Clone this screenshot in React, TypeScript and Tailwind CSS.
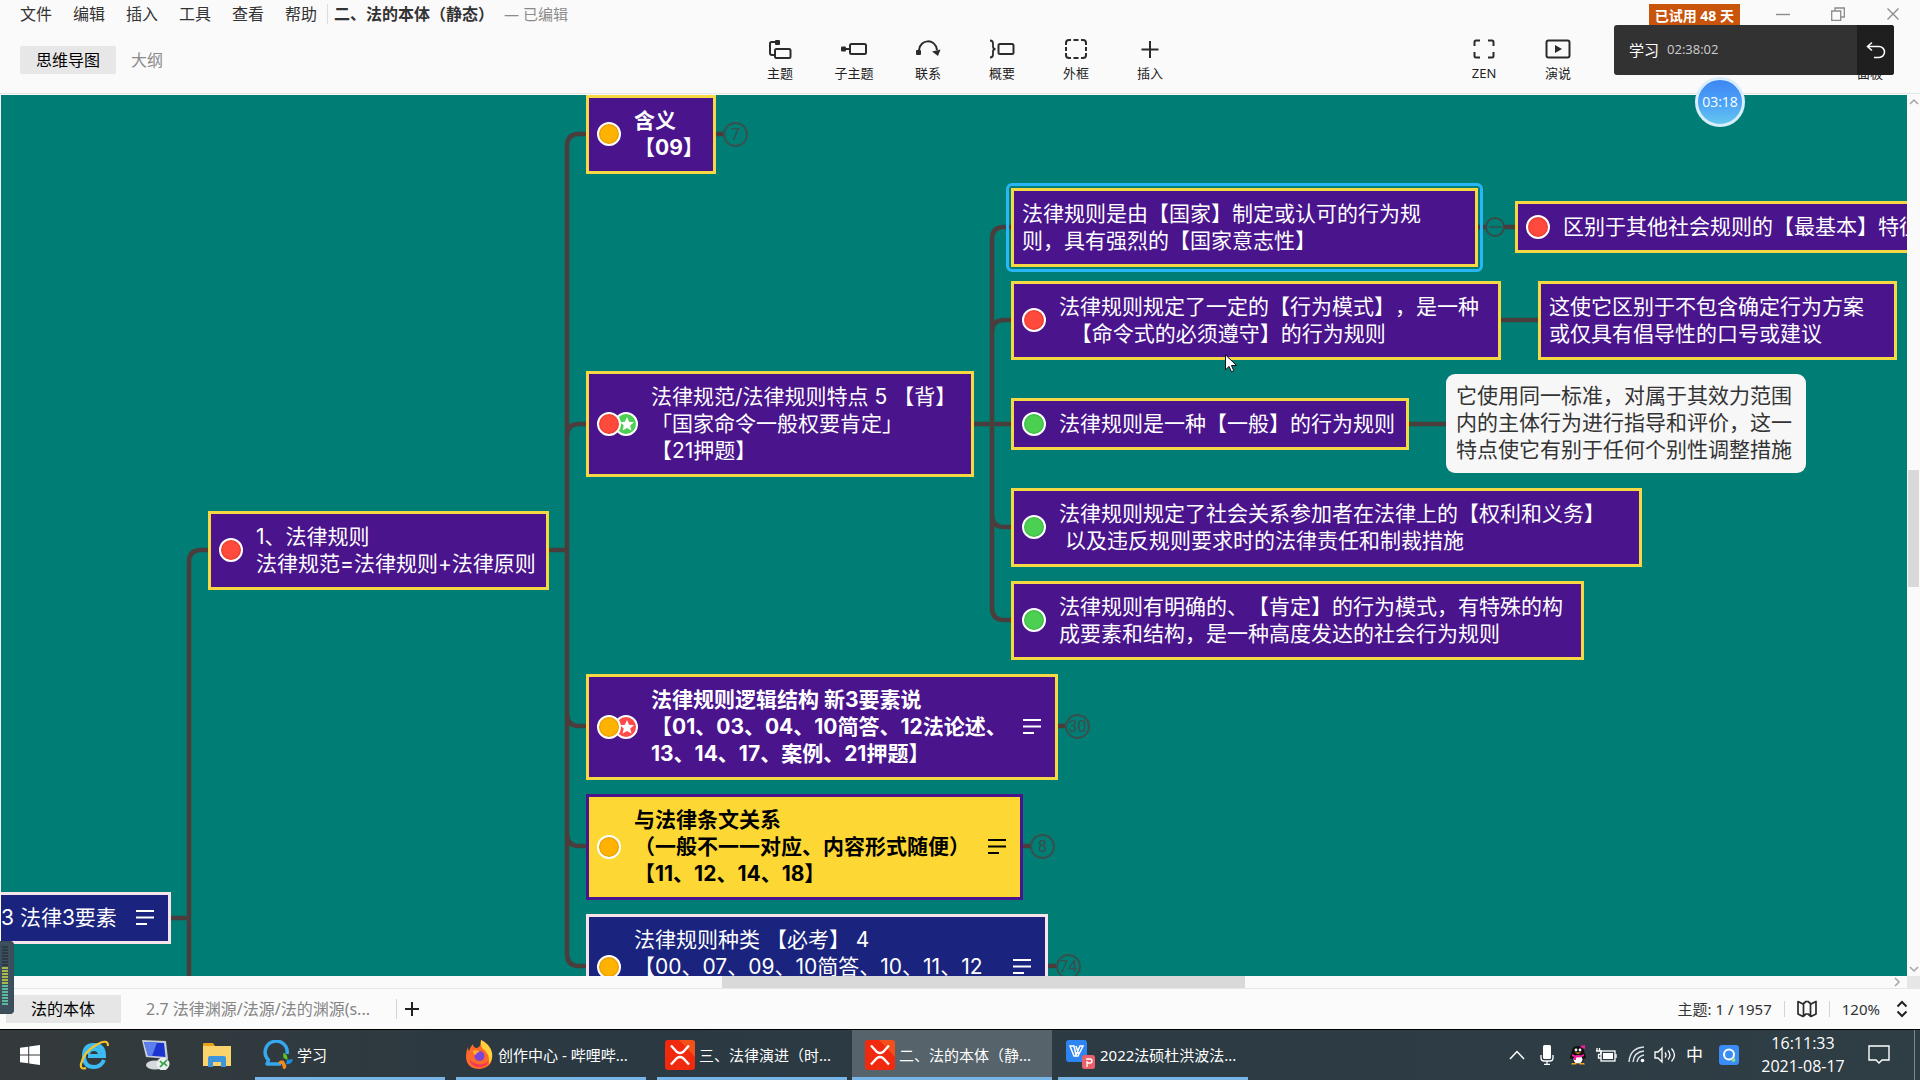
import type { ReactNode } from "react";

type Mark = "orange" | "red" | "green" | "greenStar" | "redStar";
type Tone = "purple" | "yellow" | "navy";

interface Topic {
  x: number;
  y: number;
  w: number;
  lines: string[];
  tone?: Tone;
  marks?: Mark[];
  bold?: boolean;
  note?: boolean;
  selected?: boolean;
}

const topics: Topic[] = [
  { x: -11, y: 797, w: 181, lines: ["3 法律3要素"], tone: "navy", note: true },
  { x: 207, y: 416, w: 341, lines: ["1、法律规则", "法律规范=法律规则+法律原则"], marks: ["red"] },
  { x: 585, y: 0, w: 130, lines: ["含义", "【09】"], marks: ["orange"], bold: true },
  {
    x: 585,
    y: 276,
    w: 388,
    lines: ["法律规范/法律规则特点 5 【背】", "「国家命令一般权要肯定」", "【21押题】"],
    marks: ["red", "greenStar"],
  },
  {
    x: 585,
    y: 579,
    w: 472,
    lines: ["法律规则逻辑结构 新3要素说", "【01、03、04、10简答、12法论述、", "13、14、17、案例、21押题】"],
    marks: ["orange", "redStar"],
    bold: true,
    note: true,
  },
  {
    x: 585,
    y: 699,
    w: 437,
    lines: ["与法律条文关系", "（一般不一一对应、内容形式随便）", "【11、12、14、18】"],
    tone: "yellow",
    marks: ["orange"],
    bold: true,
    note: true,
  },
  {
    x: 585,
    y: 819,
    w: 462,
    lines: ["法律规则种类 【必考】 4", "【00、07、09、10简答、10、11、12", " "],
    tone: "navy",
    marks: ["orange"],
    note: true,
  },
  {
    x: 1010,
    y: 93,
    w: 467,
    lines: ["法律规则是由【国家】制定或认可的行为规", "则，具有强烈的【国家意志性】"],
    selected: true,
  },
  {
    x: 1010,
    y: 186,
    w: 490,
    lines: ["法律规则规定了一定的【行为模式】，是一种", "  【命令式的必须遵守】的行为规则"],
    marks: ["red"],
  },
  { x: 1010, y: 303, w: 398, lines: ["法律规则是一种【一般】的行为规则"], marks: ["green"] },
  {
    x: 1010,
    y: 393,
    w: 631,
    lines: ["法律规则规定了社会关系参加者在法律上的【权利和义务】", " 以及违反规则要求时的法律责任和制裁措施"],
    marks: ["green"],
  },
  {
    x: 1010,
    y: 486,
    w: 573,
    lines: ["法律规则有明确的、【肯定】的行为模式，有特殊的构", "成要素和结构，是一种高度发达的社会行为规则"],
    marks: ["green"],
  },
  { x: 1514, y: 106, w: 480, lines: ["区别于其他社会规则的【最基本】特征"], marks: ["red"] },
  { x: 1537, y: 186, w: 359, lines: ["这使它区别于不包含确定行为方案", "或仅具有倡导性的口号或建议"] },
];

const counts = [
  { x: 722, y: 27, n: "7" },
  { x: 1064, y: 619, n: "30" },
  { x: 1029, y: 739, n: "8" },
  { x: 1055, y: 859, n: "74" },
];

const tones: Record<Tone, string> = {
  purple: "border-[#f6d845] bg-[#4a148c] text-white",
  yellow: "border-[#4a148c] bg-[#fdd835] text-black",
  navy: "border-[#f7e3ea] bg-[#1a237e] text-white",
};

const markFill: Record<Mark, string> = {
  orange: "bg-[#ffb300] shadow-[inset_0_0_2px_#b36b00]",
  red: "bg-[#ff4a3d] shadow-[inset_0_0_2px_#b32015]",
  green: "bg-[#4bd052] shadow-[inset_0_0_2px_#1d8a2a]",
  greenStar: "bg-[#4bd052]",
  redStar: "bg-[#ff4a4a]",
};

function Marker({ kind }: { kind: Mark }) {
  const star = kind === "greenStar" || kind === "redStar";
  return (
    <span className={`flex size-6 items-center justify-center rounded-full border-2 border-white ${markFill[kind]}`}>
      {star && (
        <svg viewBox="0 0 24 24" className="ml-0.5 size-4" fill="#fff">
          <path d="M12 1.5l3.1 7 7.4.8-5.6 5 1.7 7.5L12 17.900l-6.600 3.900 1.700-7.500-5.600-5 7.400-.8z" />
        </svg>
      )}
    </span>
  );
}

function TopicNode({ t }: { t: Topic }) {
  return (
    <div
      className={`absolute flex items-center border-3 pt-[9px] pr-3.5 pb-[10px] pl-2 ${tones[t.tone ?? "purple"]} ${
        t.selected ? "before:absolute before:-inset-2 before:rounded-md before:border-3 before:border-[#29b6f6]" : ""
      }`}
      style={{ left: t.x, top: t.y, width: t.w }}
    >
      {t.marks && (
        <span className="mr-[13px] flex shrink-0">
          {t.marks.map((m, i) => (
            <span key={m} className={i ? "-ml-[7px]" : "relative z-10"}>
              <Marker kind={m} />
            </span>
          ))}
        </span>
      )}
      <p className={`whitespace-pre text-[21px] leading-[27px] ${t.bold ? "font-bold" : ""}`}>{t.lines.join("\n")}</p>
      {t.note && (
        <svg
          viewBox="0 0 18 15"
          className="ml-auto h-[15px] w-[18px] shrink-0"
          stroke="currentColor"
          strokeWidth="1.8"
        >
          <path d="M0 1h18M0 7.500h18M0 14h11" />
        </svg>
      )}
    </div>
  );
}

function Connectors() {
  return (
    <svg className="absolute inset-0 h-full w-full" fill="none" stroke="#4c3d3d" strokeWidth="4.5">
      <path d="M170 823H188M188 900V467Q188 455 200 455H207M547 455H566" />
      <path d="M585 39H578Q566 39 566 51V859Q566 871 578 871H585" />
      <path d="M585 329H578Q566 329 566 341M566 619Q566 631 578 631H585M566 739Q566 751 578 751H585" />
      <path d="M973 329H1010M1010 132H1003Q991 132 991 144V513Q991 525 1003 525H1010" />
      <path d="M1010 225H1003Q991 225 991 237M991 420Q991 432 1003 432H1010" />
      <path d="M1500 225H1537M1408 329H1446M1477 132H1485M1503 132H1514" />
      <path d="M715 39H722M1057 631H1064M1022 751H1029M1047 871H1055" />
      <circle cx="1494" cy="132" r="9" stroke="#3a4a49" strokeWidth="2" />
      <path d="M1488 132h12" stroke="#3a4a49" strokeWidth="1.5" />
    </svg>
  );
}

function ToolButton({ label, children }: { label: string; children: ReactNode }) {
  return (
    <button className="flex w-[74px] flex-col items-center gap-0.5 text-[13px] leading-5 text-[#222]">
      <svg viewBox="0 0 28 24" className="h-6 w-7" fill="none" stroke="#2b2b2b" strokeWidth="2">
        {children}
      </svg>
      {label}
    </button>
  );
}

function Header() {
  return (
    <header className="relative z-20 flex flex-col border-b border-[#e3e6e6] bg-[#fbfafa]">
      <div className="flex h-7 items-center text-base text-[#333]">
        <nav className="ml-5 flex gap-[21px]">
          {["文件", "编辑", "插入", "工具", "查看", "帮助"].map((m) => (
            <button key={m}>{m}</button>
          ))}
        </nav>
        <span className="ml-2.5 h-5 w-px bg-[#ddd]" />
        <h1 className="ml-1.5 font-bold">二、法的本体（静态）</h1>
        <span className="ml-2.5 text-[15px] text-[#8b8b8b]">— 已编辑</span>
        <span className="mr-9 ml-auto h-6 self-end bg-[#c9540c] px-1.5 pt-0.5 text-sm leading-5 font-bold text-white">
          已试用 48 天
        </span>
        <div className="mr-5 flex items-center gap-[41px] text-[#8a8a8a]">
          <button aria-label="最小化">
            <svg viewBox="0 0 14 14" className="size-3.5" stroke="currentColor" fill="none">
              <path d="M0 7.500h14" strokeWidth="1.4" />
            </svg>
          </button>
          <button aria-label="还原">
            <svg viewBox="0 0 14 14" className="size-3.5" stroke="currentColor" fill="none">
              <path d="M.7 4h9v9.300h-9zM4 4V1h9.300v9H10" strokeWidth="1.3" />
            </svg>
          </button>
          <button aria-label="关闭">
            <svg viewBox="0 0 14 14" className="size-3.5" stroke="currentColor" fill="none">
              <path d="M1.500 1.500l11 11m0-11l-11 11" strokeWidth="1.3" />
            </svg>
          </button>
        </div>
      </div>
      <div className="grid h-[65px] grid-cols-[1fr_454px_1fr]">
        <div className="flex items-start pt-[18px] pl-5 text-base">
          <button className="h-7 rounded-xs bg-[#e7e7e7] px-4 leading-7 text-black">思维导图</button>
          <button className="h-7 px-[15px] leading-7 text-[#8c8c8c]">大纲</button>
        </div>
        <div className="flex pt-[9px] pl-2.5">
          <ToolButton label="主题">
            <path d="M10 5H5.500Q4 5 4 6.500V16Q4 18 6 18H9" />
            <rect x="9" y="3" width="5" height="5" rx="1" fill="#2b2b2b" stroke="none" />
            <rect x="9" y="12" width="15.500" height="9" rx="1.500" />
          </ToolButton>
          <ToolButton label="子主题">
            <rect x="1" y="9.500" width="5" height="5" rx="1" fill="#2b2b2b" stroke="none" />
            <path d="M5 12h5" />
            <rect x="10" y="7" width="16" height="10" rx="1.500" />
          </ToolButton>
          <ToolButton label="联系">
            <rect x="2" y="13" width="5" height="5" rx="1" fill="#2b2b2b" stroke="none" />
            <path d="M5 13C6 2 21 1 23 13" />
            <path d="M18 14.500l8.500-2-2.500 6.500z" fill="#2b2b2b" stroke="none" />
          </ToolButton>
          <ToolButton label="概要">
            <path d="M2 3.500q3 0 3 3v3q0 2.500 2.500 2.500Q5 12 5 14.500v3q0 3-3 3" strokeWidth="1.800" />
            <rect x="10.500" y="7" width="15" height="10" rx="1.500" />
          </ToolButton>
          <ToolButton label="外框">
            <path d="M4 8V6q0-3 3-3h2M11.500 3h5M19 3h2q3 0 3 3v2M24 10v4M24 16v2q0 3-3 3h-2M16.500 21h-5M9 21H7q-3 0-3-3v-2M4 14v-4" />
          </ToolButton>
          <ToolButton label="插入">
            <path d="M14 4v17M5.500 12.500h17" />
          </ToolButton>
        </div>
        <div className="flex justify-end pt-[9px] pr-[13px]">
          <ToolButton label="ZEN">
            <path d="M4.500 9V5q0-1.500 1.500-1.500h4M18 3.500h4q1.500 0 1.500 1.500v4M23.500 15v4q0 1.500-1.500 1.500h-4M10 20.500H6q-1.500 0-1.500-1.500v-4" />
          </ToolButton>
          <ToolButton label="演说">
            <rect x="2.500" y="3.500" width="23" height="17" rx="2" />
            <path d="M11 8l7 4-7 4z" fill="#2b2b2b" stroke="none" />
          </ToolButton>
          <span className="w-[238px]" />
          <ToolButton label="面板">
            <rect x="3" y="4" width="22" height="16" rx="2" />
          </ToolButton>
        </div>
      </div>
    </header>
  );
}

function ClassTimer() {
  return (
    <aside className="absolute top-[25px] right-[26px] z-30 flex h-[50px] w-[280px] items-center overflow-hidden rounded-[3px] bg-[#323232]">
      <span className="ml-[15px] text-[15px] text-white">学习</span>
      <time className="ml-2 font-[Open_Sans] text-[13px] text-[#cfcfcf]">02:38:02</time>
      <button aria-label="返回" className="ml-auto flex h-full w-[37px] items-center justify-center bg-[#1f1f1f]">
        <svg viewBox="0 0 20 18" className="h-[18px] w-5" fill="none" stroke="#fff" strokeWidth="1.5">
          <path d="M6 1.500L1.500 5.500 6 9.500M1.500 5.500H13a5.500 5.500 0 010 11H8" />
        </svg>
      </button>
    </aside>
  );
}

function Chevron({ d, className }: { d: string; className?: string }) {
  return (
    <svg viewBox="0 0 10 10" className={`size-2.5 ${className ?? ""}`} fill="none" stroke="#a5a5a5" strokeWidth="1.5">
      <path d={d} />
    </svg>
  );
}

function SheetBar() {
  return (
    <footer className="flex h-10 items-center bg-[#fbfbfb] text-base text-[#333]">
      <button className="ml-1.5 h-7 w-[115px] bg-[#e6e6e6] pr-3 pl-[25px] text-left leading-7 text-black">法的本体</button>
      <button className="ml-[25px] w-[238px] text-left text-[#858585]">2.7 法律渊源/法源/法的渊源(s...</button>
      <span className="ml-3 h-5 w-px bg-[#d5d5d5]" />
      <button aria-label="新建画布" className="ml-[7px]">
        <svg viewBox="0 0 16 16" className="size-4" stroke="#222" strokeWidth="2">
          <path d="M8 1v14M1 8h14" />
        </svg>
      </button>
      <div className="mr-3 ml-auto flex items-center text-[15px]">
        <span>主题: 1 / 1957</span>
        <span className="mx-3 h-4 w-px bg-[#d5d5d5]" />
        <button aria-label="导航图">
          <svg viewBox="0 0 20 18" className="h-[18px] w-5" fill="none" stroke="#2b2b2b" strokeWidth="1.700" strokeLinejoin="round">
            <path d="M1 1.500l5 2.500 3-2.500h2L14 4l5-2.500v12.500L14 16.500 11 14H9l-3 2.500L1 14zM6.500 4v12M13.500 4v12" />
          </svg>
        </button>
        <span className="mx-3 h-4 w-px bg-[#d5d5d5]" />
        <span>120%</span>
        <button aria-label="缩放" className="ml-4">
          <svg viewBox="0 0 12 18" className="h-[18px] w-3" fill="none" stroke="#222" strokeWidth="2">
            <path d="M1.500 6.500L6 2l4.500 4.500M1.500 11.500L6 16l4.500-4.500" />
          </svg>
        </button>
      </div>
    </footer>
  );
}

function XMindIcon() {
  return (
    <svg viewBox="0 0 30 30" className="size-[30px]">
      <rect width="30" height="30" rx="3" fill="#f0290f" />
      <path d="M14 0h13q3 0 3 3v14z" fill="#f2601f" opacity=".7" />
      <path d="M6 5.500L12 12q3 2 6 0l6-6.500M6 24.500L12 18q3-2 6 0l6 6.500" fill="none" stroke="#fff" strokeWidth="2.300" />
    </svg>
  );
}

function TencentClassIcon() {
  return (
    <svg viewBox="0 0 30 30" className="size-[30px]" fill="none">
      <path d="M18 24H4l1.500-4A11 11 0 1 1 24 14" stroke="#35a7ee" strokeWidth="3.500" strokeLinejoin="round" />
      <path d="M20 13q5 1 4.500 7l-4-2z" fill="#5fc21f" />
      <path d="M30 19q-1 6-7 5l1-4z" fill="#178fe5" />
      <path d="M15 23q2-4 6-2l2.500 5q-1 5-3.500 2.500l-1-4z" fill="#f48a1c" />
    </svg>
  );
}

function FirefoxIcon() {
  return (
    <svg viewBox="0 0 30 30" className="size-[30px]">
      <path d="M4 7q0 3 1 4 1-4 4-7 0 3 3 4 5 0 5-8 9 4 11 13 2 14-12 16Q2 29 2 16q0-5 2-9z" fill="#ff6a2a" />
      <path d="M17 0q9 4 11 13 1 6-3 11 1-11-6-15-3-3-2-9z" fill="#ffd23c" />
      <path d="M5 19q3 9 12 8 6-1 8-6-6 5-12 3-5-1-8-5z" fill="#f0365a" />
      <circle cx="15.500" cy="16" r="5" fill="#7a45d8" />
      <path d="M9 11q4-2 7 1-4 0-4 3-3-1-3-4z" fill="#ffb02e" />
    </svg>
  );
}

function WpsIcon() {
  return (
    <svg viewBox="0 0 30 30" className="size-[30px]" fill="none">
      <rect width="21" height="22" rx="3" fill="#2d84f2" />
      <path d="M4 6h4l2 9 4-9h3l-5 10H8zM10 6l3 9" stroke="#fff" strokeWidth="1.500" />
      <rect x="16" y="15" width="13" height="14" rx="2.500" fill="#e8616a" />
      <path d="M20 19h4q2 0 2 2t-2 2h-3v-2M21 23v4" stroke="#fff" strokeWidth="1.300" />
    </svg>
  );
}

function TaskItem({ icon, label, className }: { icon: ReactNode; label: string; className: string }) {
  return (
    <button className={`flex h-full items-center gap-1 border-b-3 border-[#76b5e6] pt-[3px] text-left text-[15px] ${className}`}>
      <span className="size-[30px] shrink-0">{icon}</span>
      <span className="truncate">{label}</span>
    </button>
  );
}

function Taskbar() {
  return (
    <div className="flex h-[51px] items-center border-t border-black bg-linear-to-r from-[#343a3b] via-[#2b3942] via-30% to-[#2f3d45] text-white">
      <div className="flex h-full w-[255px] items-center pl-5">
        <button aria-label="开始">
          <svg viewBox="0 0 20 20" className="size-5" fill="#fff">
            <path d="M0 2.800L8.200 1.700V9.500H0zM9.200 1.500L20 0v9.500H9.200zM0 10.500h8.200v7.800L0 17.200zM9.200 10.500H20V20L9.200 18.500z" />
          </svg>
        </button>
        <button aria-label="Internet Explorer" className="ml-[39px]">
          <svg viewBox="0 0 30 30" className="size-[30px]" fill="none">
            <path d="M25 20Q22 27 15 27 5 27 5 16T15 5q10 0 10 11H9M9 14q1-5 6-5t6 5" stroke="#3cbcf3" strokeWidth="4" />
            <path d="M7 28q-6 2-5-4Q5 12 17 5q12-7 12 1" stroke="#f6c52c" strokeWidth="2.200" />
          </svg>
        </button>
        <button aria-label="远程桌面" className="ml-[31px]">
          <svg viewBox="0 0 30 30" className="size-[30px]">
            <path d="M2 0l24 1 2 18-22-2z" fill="#c8ced6" />
            <path d="M4 2l20 1 1.500 14L8 15.500z" fill="#1c35cf" />
            <path d="M4 2l13 .5L12 16l-4-.5z" fill="#5d80ee" />
            <ellipse cx="15" cy="25" rx="9" ry="4.500" fill="#d5d9dd" />
            <circle cx="23" cy="24" r="6.500" fill="#e9edeb" />
            <path d="M20 21l3 3-3 3M27 20l-3 3 3 3" stroke="#2f9e44" strokeWidth="1.700" fill="none" />
          </svg>
        </button>
        <button aria-label="文件资源管理器" className="ml-8">
          <svg viewBox="0 0 30 30" className="size-[30px]">
            <path d="M1 4q0-1 1-1h9l2 3h-12z" fill="#e8a317" />
            <path d="M1 6h28v20H1z" fill="#fbd36b" />
            <path d="M6 27v-9q0-2 2-2h14q2 0 2 2v9h-5v-5h-8v5z" fill="#3d96dc" />
          </svg>
        </button>
      </div>
      <TaskItem className="w-[190px] pl-2" icon={<TencentClassIcon />} label="学习" />
      <TaskItem className="ml-[11px] w-[190px] pl-2" icon={<FirefoxIcon />} label="创作中心 - 哔哩哔..." />
      <TaskItem className="ml-[11px] w-[190px] pl-2" icon={<XMindIcon />} label="三、法律演进（时..." />
      <TaskItem className="ml-[5px] w-[200px] bg-[#56636b] pl-[13px]" icon={<XMindIcon />} label="二、法的本体（静..." />
      <TaskItem className="ml-1.5 w-[190px] pl-2" icon={<WpsIcon />} label="2022法硕杜洪波法..." />
      <div className="ml-auto flex h-full items-center">
        <svg viewBox="0 0 16 10" className="h-2.5 w-4" fill="none" stroke="#fff" strokeWidth="1.500">
          <path d="M1 9l7-7.500L15 9" />
        </svg>
        <svg viewBox="0 0 14 20" className="ml-[15px] h-5 w-3.5" fill="none" stroke="#fff" strokeWidth="1.300">
          <rect x="3" y="0" width="8" height="14" rx="1.500" fill="#fff" stroke="none" />
          <path d="M1 10v3q0 3 3 3h6q3 0 3-3v-3M7 16v3M4 19.300h6" />
        </svg>
        <svg viewBox="0 0 18 20" className="ml-[15px] h-5 w-[18px]">
          <path d="M3 6q0-5 6-5t6 5l2 6q0 3-2 1-1 6-6 6t-6-6q-3 2-2-1z" fill="#111" />
          <ellipse cx="9" cy="14.500" rx="4.500" ry="4" fill="#fff" />
          <circle cx="7" cy="5" r="1.400" fill="#fff" />
          <circle cx="11" cy="5" r="1.400" fill="#fff" />
          <path d="M5.500 7.500h7L9 9z" fill="#f7a21b" />
          <path d="M3 9q6 3 12 0v2q-4 2-8 1.500V15H5v-3l-2-1zM11 1l5-1v4l-3-1z" fill="#f3199f" />
          <path d="M3 18h4.500v1.600H2zM10.500 18H15l1 1.600h-5.500z" fill="#f7a21b" />
        </svg>
        <svg viewBox="0 0 22 14" className="ml-2 h-3.5 w-[22px]" fill="none" stroke="#fff" strokeWidth="1.300">
          <rect x="6" y="3" width="14" height="10" />
          <rect x="8" y="5" width="10" height="6" fill="#fff" stroke="none" />
          <path d="M21 6v4M2 0v3M4.500 0v3M1 3h5v2q0 1.500-2.500 1.500V10H6" />
        </svg>
        <svg viewBox="0 0 18 18" className="ml-[11px] size-[18px]" fill="none" stroke="#dfe4e6" strokeWidth="1.400">
          <path d="M1 16Q2 2 16 1M5 16Q6 6 16 5M9 16q1-6 7-7" />
          <circle cx="14.500" cy="14.500" r="1.800" fill="#fff" stroke="none" />
        </svg>
        <svg viewBox="0 0 22 18" className="ml-2 h-[18px] w-[22px]" fill="none" stroke="#fff" strokeWidth="1.300">
          <path d="M1 6h3l4-4v14l-4-4H1zM11 6.500q2 2.500 0 5M14 4.500q4 4.500 0 9M17.500 2.500q6 6.500 0 13" />
        </svg>
        <span className="ml-2.5 text-[17px] leading-6">中</span>
        <svg viewBox="0 0 20 20" className="ml-4 size-5" fill="none">
          <rect width="20" height="20" rx="3" fill="#3b8cf5" />
          <circle cx="10" cy="9.500" r="5" stroke="#fff" strokeWidth="2" />
          <circle cx="14.500" cy="15" r="2" fill="#86e08c" />
        </svg>
        <time className="ml-[21px] w-[86px] text-center font-[Open_Sans] text-base leading-[23px]">
          16:11:33
          <br />
          2021-08-17
        </time>
        <svg viewBox="0 0 22 22" className="ml-[22px] size-[22px]" fill="none" stroke="#fff" strokeWidth="1.400">
          <path d="M1 2h20v14h-7l-3 3-3-3H1z" />
        </svg>
        <span className="mr-[5px] ml-6 h-full w-px bg-[#7c868c]" />
      </div>
    </div>
  );
}

export default function App() {
  return (
    <div
      lang="zh-CN"
      className="relative flex h-screen flex-col overflow-hidden bg-[#fbfbfb] font-['Noto_Sans','Noto_Sans_CJK_SC',sans-serif] [text-spacing-trim:space-all]"
    >
      <Header />
      <ClassTimer />
      <div className="absolute top-[77px] right-[175px] z-30 flex size-[50px] items-center justify-center rounded-full border-3 border-[#d8eefc] bg-linear-to-b from-[#3f87f3] via-[#4aa0f6] to-[#66c6ee] font-[Open_Sans] text-sm text-white">
        03:18
      </div>

      <div className="flex min-h-0 flex-1 pt-px">
        <main className="relative ml-px flex-1 overflow-hidden bg-[#007d74] font-['Inter','Noto_Sans_CJK_SC',sans-serif]">
          <Connectors />
          {topics.map((t) => (
            <TopicNode key={t.lines[0]} t={t} />
          ))}
          <p
            className="absolute rounded-[9px] bg-[#f7f7f7] px-2.5 pt-2 pb-2.5 text-[21px] leading-[27px] whitespace-pre text-[#333]"
            style={{ left: 1445, top: 279, width: 360 }}
          >
            {"它使用同一标准，对属于其效力范围\n内的主体行为进行指导和评价，这一\n特点使它有别于任何个别性调整措施"}
          </p>
          {counts.map((c) => (
            <button
              key={c.n}
              className="absolute flex size-[25px] items-center justify-center rounded-full border-2 border-[#38504e] font-[Roboto] text-base text-[#38504e]"
              style={{ left: c.x, top: c.y }}
            >
              {c.n}
            </button>
          ))}
          <svg viewBox="0 0 12 19" className="absolute top-[259px] left-[1224px] h-[19px] w-3" fill="#fff" stroke="#111">
            <path d="M.5.800v15l3.600-3.400 2.300 5.400 2.400-1-2.300-5.300h5z" />
          </svg>
        </main>
        <div className="flex w-[13px] flex-col items-center bg-[#fafafa] py-0.5">
          <Chevron d="M1 7l4-4 4 4" />
          <span className="mt-[363px] h-[117px] w-[11px] bg-[#d9d9d9]" />
          <Chevron d="M1 3l4 4 4-4" className="mt-auto" />
        </div>
      </div>
      <div className="flex h-[13px] items-center border-b border-[#e6e6e6] bg-[#fafafa]">
        <span className="ml-[722px] h-3 w-[523px] bg-[#d9d9d9]" />
        <Chevron d="M3 1l4 4-4 4" className="mr-[5px] ml-auto" />
        <span className="h-3 w-[13px] bg-[#e6e6e6]" />
      </div>
      <SheetBar />
      <Taskbar />

      <div className="absolute bottom-[66px] left-0 z-30 flex h-[73px] w-3.5 flex-col justify-end gap-px rounded-r-sm border border-l-0 border-[#3a4a55] bg-[#3d4f5c] px-0.5 pr-1.5 pb-2">
        {Array.from({ length: 20 }, (_, i) => (
          <span
            key={i}
            className={`h-0.5 w-1.5 shrink-0 ${i < 7 ? "bg-[#2a3b45]" : i < 13 ? "bg-[#a9b84a]" : "bg-[#5cb89a]"}`}
          />
        ))}
      </div>
    </div>
  );
}
